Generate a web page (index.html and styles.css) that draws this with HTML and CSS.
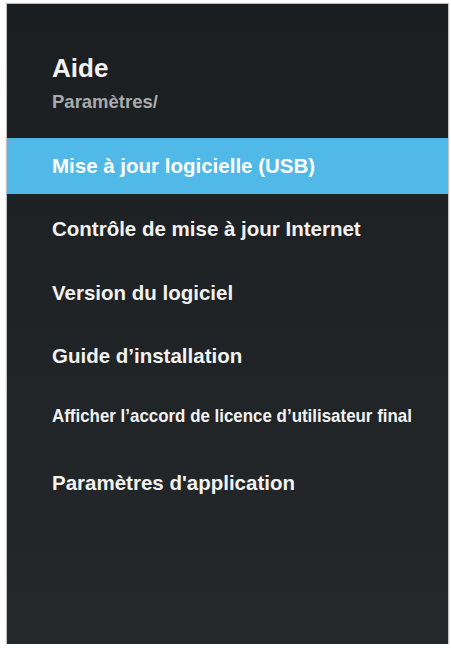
FILE: index.html
```html
<!DOCTYPE html>
<html lang="fr">
<head>
  <meta charset="UTF-8">
  <meta name="viewport" content="width=device-width, initial-scale=1.0">
  <title>Aide</title>
  <link rel="stylesheet" href="styles.css">
</head>
<body>
  <!-- Écran du menu Aide -->
  <div class="screen">
    <div class="page-head">
      <h1 class="page-title">Aide</h1>
      <p class="crumb">Paramètres/</p>
    </div>

    <ul class="menu">
      <li class="menu-item selected">Mise à jour logicielle (USB)</li>
      <li class="menu-item">Contrôle de mise à jour Internet</li>
      <li class="menu-item">Version du logiciel</li>
      <li class="menu-item">Guide d’installation</li>
      <li class="menu-item narrow"><span>Afficher l’accord de licence d’utilisateur final</span></li>
      <li class="menu-item">Paramètres d'application</li>
    </ul>
  </div>
</body>
</html>
```

FILE: styles.css
```css
body {
  font-family: 'Liberation Sans', Arial, Helvetica, sans-serif;
  margin: 0;
  padding: 0;
  background-color: #fff;
}

/* Panneau sombre */
.screen {
  margin: 4px 0 0 7px;
  width: 441px;
  height: 640px;
  padding-top: 49px;
  box-sizing: border-box;
  background: linear-gradient(180deg, #1b1e20 0%, #202325 45%, #24282a 100%);
  box-shadow: 0 0 1px 1px #c4c4c4;
  color: #f2f2f2;
  font-weight: bold;
  overflow: hidden;
}

/* En-tête */
.page-head {
  padding-left: 45px;
}

.page-title {
  margin: 0;
  font-size: 26px;
  line-height: 30px;
  font-weight: bold;
}

.crumb {
  margin: 8px 0 0;
  font-size: 18.5px;
  line-height: 22px;
  color: #a9abac;
}

/* Liste des options */
.menu {
  list-style: none;
  margin: 25px 0 0;
  padding: 0;
}

.menu-item {
  height: 56px;
  line-height: 56px;
  padding-left: 45px;
  margin-bottom: 7.4px;
  font-size: 20.5px;
  white-space: nowrap;
}

.menu-item.selected {
  background-color: #50b9e7;
  color: #fff;
}

.menu-item.narrow {
  font-size: 19px;
  margin-top: -4px;
  margin-bottom: 11.4px;
}

.menu-item.narrow span {
  display: inline-block;
  transform: scaleX(0.89);
  transform-origin: left center;
}
```
